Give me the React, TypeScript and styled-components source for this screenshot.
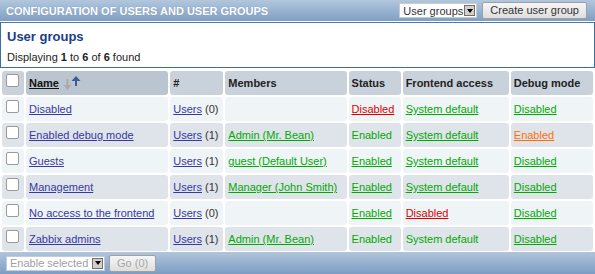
import React from "react";
import styled, { createGlobalStyle } from "styled-components";

const GlobalStyle = createGlobalStyle`
  body {
    margin: 0;
    background: #ffffff;
    font-family: "Liberation Sans", Arial, sans-serif;
    font-size: 11px;
    color: #222222;
  }
`;

type Tone = "green" | "red" | "orange";

interface Group {
  name: string;
  users: number;
  members: string;
  status: [string, Tone, boolean];
  frontend: [string, Tone, boolean];
  debug: [string, Tone, boolean];
}

const groups: Group[] = [
  {
    name: "Disabled",
    users: 0,
    members: "",
    status: ["Disabled", "red", true],
    frontend: ["System default", "green", true],
    debug: ["Disabled", "green", true],
  },
  {
    name: "Enabled debug mode",
    users: 1,
    members: "Admin (Mr. Bean)",
    status: ["Enabled", "green", false],
    frontend: ["System default", "green", true],
    debug: ["Enabled", "orange", true],
  },
  {
    name: "Guests",
    users: 1,
    members: "guest (Default User)",
    status: ["Enabled", "green", true],
    frontend: ["System default", "green", true],
    debug: ["Disabled", "green", true],
  },
  {
    name: "Management",
    users: 1,
    members: "Manager (John Smith)",
    status: ["Enabled", "green", true],
    frontend: ["System default", "green", true],
    debug: ["Disabled", "green", true],
  },
  {
    name: "No access to the frontend",
    users: 0,
    members: "",
    status: ["Enabled", "green", true],
    frontend: ["Disabled", "red", true],
    debug: ["Disabled", "green", true],
  },
  {
    name: "Zabbix admins",
    users: 1,
    members: "Admin (Mr. Bean)",
    status: ["Enabled", "green", false],
    frontend: ["System default", "green", false],
    debug: ["Disabled", "green", true],
  },
];

const toneColors: Record<Tone, string> = {
  green: "#00aa00",
  red: "#dc0000",
  orange: "#ff6f00",
};

const Page = styled.div`
  width: 595px;
`;

const TitleBar = styled.div`
  height: 21px;
  display: flex;
  align-items: center;
  justify-content: space-between;
  padding: 0 8px 0 6px;
  background: linear-gradient(#b2c7dd, #7f9fc3);
  box-sizing: border-box;
`;

const BarTitle = styled.div`
  color: #ffffff;
  font-weight: bold;
  font-size: 11px;
  text-transform: uppercase;
  text-shadow: 0 0 1px rgba(60, 90, 130, 0.4);
  white-space: nowrap;
`;

const Controls = styled.div`
  display: flex;
  align-items: center;
  gap: 5px;
`;

const SelectBox = styled.div<{ $w: number; $disabled?: boolean }>`
  width: ${(p) => p.$w}px;
  height: 15px;
  display: flex;
  align-items: center;
  justify-content: space-between;
  background: #ffffff;
  border: 1px solid #c3ccd6;
  box-sizing: border-box;
  padding-left: 3px;
  color: ${(p) => (p.$disabled ? "#a0a0a0" : "#333333")};
  font-size: 11px;
  white-space: nowrap;
  overflow: hidden;
`;

const SelectArrow = styled.div`
  flex: none;
  width: 11px;
  height: 11px;
  margin-right: 1px;
  background: #d4d0c8;
  border: 1px solid #707070;
  box-sizing: border-box;
  display: flex;
  align-items: center;
  justify-content: center;

  &::after {
    content: "";
    border-left: 3px solid transparent;
    border-right: 3px solid transparent;
    border-top: 4px solid #000000;
  }
`;

const Button = styled.button<{ $disabled?: boolean }>`
  height: 17px;
  padding: 0 7px;
  font-family: "Liberation Sans", Arial, sans-serif;
  font-size: 11px;
  color: ${(p) => (p.$disabled ? "#a6a6a6" : "#333333")};
  background: linear-gradient(#f6f6f6, #dedede);
  border: 1px solid #a0a0a0;
  border-radius: 2px;
  line-height: 15px;
  white-space: nowrap;
`;

const Box = styled.div`
  border: 1px solid #3a6ea5;
  border-top: 1px solid #4a78a8;
  padding: 6px 6px 3px 6px;
  margin-top: 1px;
`;

const BoxTitle = styled.div`
  color: #203c8a;
  font-weight: bold;
  font-size: 13px;
  line-height: 16px;
`;

const Found = styled.div`
  margin-top: 6px;
  line-height: 13px;
`;

const Table = styled.table`
  width: 595px;
  border-collapse: separate;
  border-spacing: 2px;
  table-layout: fixed;
  margin: 1px 0 -1px 0;
`;

const Th = styled.th<{ $w: number; $sorted?: boolean }>`
  width: ${(p) => p.$w}px;
  height: 24px;
  padding: 0 3px;
  text-align: left;
  font-weight: bold;
  font-size: 11px;
  color: #222222;
  background: ${(p) => (p.$sorted ? "#bac5cf" : "#c9d1da")};
  border-radius: 3px;
  box-sizing: border-box;
  white-space: nowrap;
`;

const CheckTh = styled(Th)`
  padding: 0 0 0 4px;
  vertical-align: top;
`;

const Row = styled.tr<{ $odd: boolean }>`
  & > td {
    background: ${(p) => (p.$odd ? "#eff4f7" : "#dfe4eb")};
  }
`;

const Td = styled.td`
  height: 24px;
  padding: 0 3px;
  border-radius: 3px;
  white-space: nowrap;
  overflow: hidden;
  box-sizing: border-box;
`;

const CheckCell = styled(Td)`
  padding: 0 0 0 4px;
  vertical-align: top;
`;

const Check = styled.span`
  display: block;
  width: 13px;
  height: 13px;
  margin-top: 3px;
  background: #ffffff;
  border: 1px solid #9a9a9a;
  border-radius: 2px;
  box-sizing: border-box;
`;

const NameLink = styled.a`
  color: #38389f;
  text-decoration: underline;
  cursor: pointer;
`;

const HeaderLink = styled.a`
  color: #111111;
  text-decoration: underline;
`;

const StateText = styled.span<{ $tone: Tone; $link: boolean }>`
  color: ${(p) => toneColors[p.$tone]};
  text-decoration: ${(p) => (p.$link ? "underline" : "none")};
  cursor: ${(p) => (p.$link ? "pointer" : "default")};
`;

const Count = styled.span`
  color: #333333;
`;

const SortIcon = styled.svg`
  vertical-align: -3px;
  margin-left: 4px;
`;

const Footer = styled.div`
  height: 22px;
  display: flex;
  align-items: center;
  gap: 4px;
  padding-left: 6px;
  background: linear-gradient(#b0c5db, #7c9dc3);
`;

const State: React.FC<{ v: [string, Tone, boolean] }> = ({ v }) => (
  <StateText $tone={v[1]} $link={v[2]}>
    {v[0]}
  </StateText>
);

const Select: React.FC<{ label: string; w: number; disabled?: boolean }> = ({
  label,
  w,
  disabled,
}) => (
  <SelectBox $w={w} $disabled={disabled}>
    <span>{label}</span>
    <SelectArrow />
  </SelectBox>
);

export default function App() {
  return (
    <Page>
      <GlobalStyle />
      <TitleBar>
        <BarTitle>Configuration of users and user groups</BarTitle>
        <Controls>
          <Select label="User groups" w={78} />
          <Button>Create user group</Button>
        </Controls>
      </TitleBar>
      <Box>
        <BoxTitle>User groups</BoxTitle>
        <Found>
          Displaying <b>1</b> to <b>6</b> of <b>6</b> found
        </Found>
      </Box>
      <Table>
        <thead>
          <tr>
            <CheckTh $w={22}>
              <Check />
            </CheckTh>
            <Th $w={142} $sorted>
              <HeaderLink>Name</HeaderLink>
              <SortIcon width="18" height="14" viewBox="0 0 18 14">
                <path d="M3.5 3h2v6h3L4.5 14 0.5 9h3z" fill="#a9a9a9" />
                <path d="M12 10V5H8.5L13 0 17.5 5H14v5z" fill="#3b5c9b" />
              </SortIcon>
            </Th>
            <Th $w={53}>#</Th>
            <Th $w={121}>Members</Th>
            <Th $w={52}>Status</Th>
            <Th $w={106}>Frontend access</Th>
            <Th $w={82}>Debug mode</Th>
          </tr>
        </thead>
        <tbody>
          {groups.map((g, i) => (
            <Row key={g.name} $odd={i % 2 === 0}>
              <CheckCell>
                <Check />
              </CheckCell>
              <Td>
                <NameLink>{g.name}</NameLink>
              </Td>
              <Td>
                <NameLink>Users</NameLink> <Count>({g.users})</Count>
              </Td>
              <Td>
                {g.members && <State v={[g.members, "green", true]} />}
              </Td>
              <Td>
                <State v={g.status} />
              </Td>
              <Td>
                <State v={g.frontend} />
              </Td>
              <Td>
                <State v={g.debug} />
              </Td>
            </Row>
          ))}
        </tbody>
      </Table>
      <Footer>
        <Select label="Enable selected" w={99} disabled />
        <Button $disabled>Go (0)</Button>
      </Footer>
    </Page>
  );
}
